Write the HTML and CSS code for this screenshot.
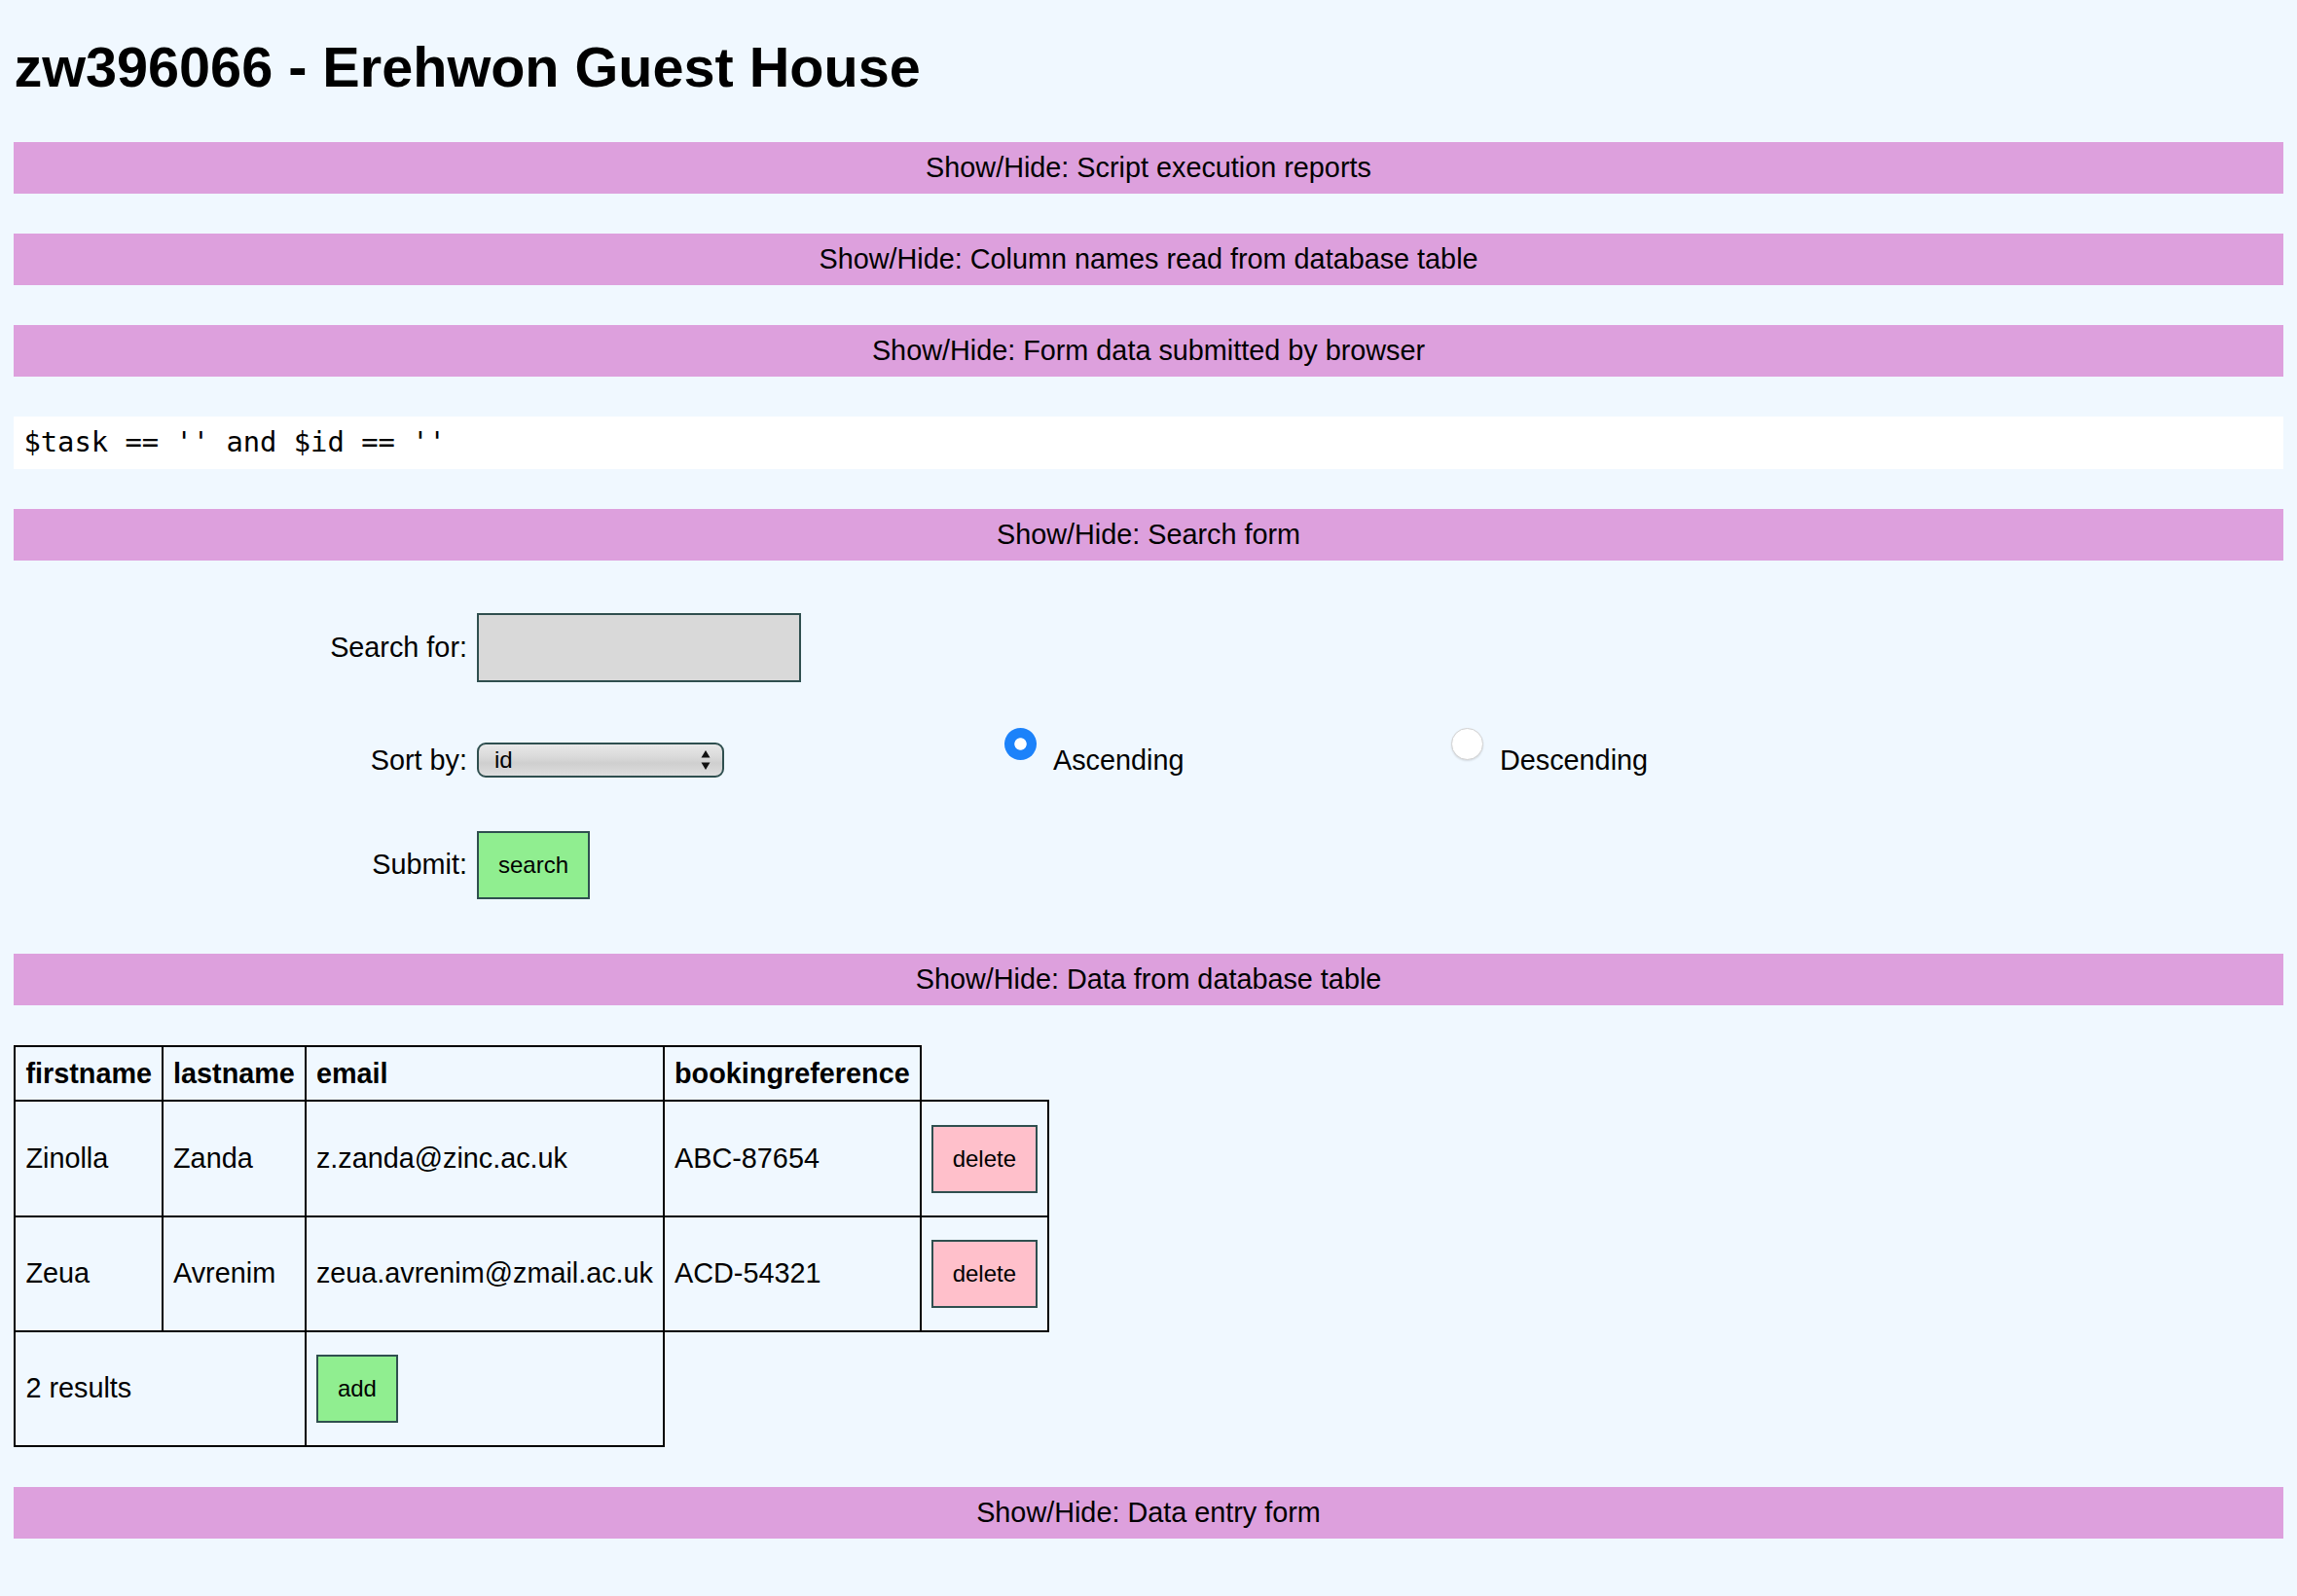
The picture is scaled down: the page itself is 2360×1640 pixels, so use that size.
FILE: index.html
```html
<!DOCTYPE html>
<html lang="en">
<head>
<meta charset="utf-8">
<title>zw396066 - Erehwon Guest House</title>
<link rel="stylesheet" href="styles.css">
</head>
<body>
<h1 class="title">zw396066 - Erehwon Guest House</h1>

<div class="toggle">Show/Hide: Script execution reports</div>
<div class="toggle">Show/Hide: Column names read from database table</div>
<div class="toggle">Show/Hide: Form data submitted by browser</div>

<pre class="code">$task == '' and $id == ''</pre>

<div class="toggle">Show/Hide: Search form</div>

<form class="search-form">
  <div class="form-row row-search">
    <label class="form-label" for="q">Search for:</label>
    <div class="form-field"><input id="q" class="search-input" type="text"></div>
  </div>
  <div class="form-row row-sort">
    <label class="form-label" for="sort">Sort by:</label>
    <div class="form-field">
      <span class="select-wrap">
        <select id="sort" class="sort-select"><option>id</option></select>
        <svg class="select-arrows" width="10" height="20" viewBox="0 0 10 20" aria-hidden="true"><path d="M5 0 L9.5 7.5 L0.5 7.5 Z M0.5 12.5 L9.5 12.5 L5 20 Z" fill="#111"/></svg>
      </span>
    </div>
    <label class="radio-cell"><input class="radio" type="radio" name="order" checked>Ascending</label>
    <label class="radio-cell"><input class="radio" type="radio" name="order">Descending</label>
  </div>
  <div class="form-row row-submit">
    <span class="form-label">Submit:</span>
    <div class="form-field"><button type="button" class="btn btn-go">search</button></div>
  </div>
</form>

<div class="toggle">Show/Hide: Data from database table</div>

<table class="data-table">
  <tr><th>firstname</th><th>lastname</th><th>email</th><th>bookingreference</th></tr>
  <tr><td>Zinolla</td><td>Zanda</td><td>z.zanda@zinc.ac.uk</td><td>ABC-87654</td><td><button type="button" class="btn btn-delete">delete</button></td></tr>
  <tr><td>Zeua</td><td>Avrenim</td><td>zeua.avrenim@zmail.ac.uk</td><td>ACD-54321</td><td><button type="button" class="btn btn-delete">delete</button></td></tr>
  <tr><td colspan="2">2 results</td><td><button type="button" class="btn btn-go">add</button></td></tr>
</table>

<div class="toggle">Show/Hide: Data entry form</div>
</body>
</html>
```

FILE: styles.css
```css
html {
  background: #f0f8ff;
}

body {
  margin: 14.4px;
  background: #f0f8ff;
  color: #000;
  font-family: "Liberation Sans", Arial, Helvetica, sans-serif;
  font-size: 28.8px;
  line-height: normal;
}

.title {
  font-size: 57.6px;
  font-weight: bold;
  margin: 22px 0 44px;
}

.toggle {
  background: #dda0dd;
  text-align: center;
  padding: 10px;
  line-height: 33px;
  margin: 41px 0;
}

.code {
  background: #fff;
  font-family: "DejaVu Sans Mono", "Liberation Mono", monospace;
  font-size: 28.8px;
  line-height: 33.5px;
  padding: 10px;
  margin: 41px 0;
  white-space: pre;
}

/* search form */
.search-form {
  margin: 54px 0 56px;
}

.form-row {
  display: grid;
  grid-template-columns: 475.6px 542px 459px 1fr;
  align-items: center;
}

.row-sort {
  margin-top: 47.5px;
}

.row-submit {
  margin-top: 39.5px;
}

.form-label {
  text-align: right;
  padding-right: 10px;
  line-height: 33px;
}

.form-field {
  display: flex;
  align-items: center;
}

.search-input {
  box-sizing: border-box;
  width: 333px;
  height: 71px;
  margin: 0;
  border: 2px solid #2f4f4f;
  background: #d9d9d9;
  font-family: inherit;
  font-size: 24px;
  padding: 0 6px;
}

.select-wrap {
  position: relative;
  display: inline-block;
}

.sort-select {
  appearance: none;
  -webkit-appearance: none;
  box-sizing: border-box;
  display: block;
  width: 254px;
  height: 36px;
  margin: 0;
  padding: 0 30px 0 16px;
  border: 2px solid #2f4f4f;
  border-radius: 9px;
  background: linear-gradient(#e8e8e8 0%, #dadada 40%, #cfcfcf 60%, #dedede 100%);
  font-family: inherit;
  font-size: 24px;
  line-height: 32px;
  color: #000;
}

.select-arrows {
  position: absolute;
  right: 14px;
  top: 8px;
  pointer-events: none;
}

.radio-cell {
  display: flex;
  align-items: center;
  line-height: 33px;
}

.radio {
  appearance: none;
  -webkit-appearance: none;
  box-sizing: border-box;
  width: 33px;
  height: 33px;
  margin: 0 17px 33px 0;
  border-radius: 50%;
  border: 1px solid #d2d2d2;
  background: #fff;
  box-shadow: 0 1px 2px rgba(0, 0, 0, 0.12);
}

.radio:checked {
  border: none;
  background: radial-gradient(circle, #fff 0 5.8px, #1c82fa 6.6px);
  box-shadow: none;
}

/* buttons */
.btn {
  box-sizing: border-box;
  border: 2px solid #2f4f4f;
  border-radius: 0;
  padding: 19px 20px;
  margin: 0;
  font-family: inherit;
  font-size: 24px;
  line-height: 28px;
  color: #000;
}

.btn-go {
  background: #90ee90;
}

.btn-delete {
  background: #ffc0cb;
}

/* data table */
.data-table {
  border-collapse: collapse;
  margin: 41px 0;
}

.data-table th,
.data-table td {
  border: 2px solid #000;
  padding: 10.8px 10px;
  text-align: left;
  vertical-align: middle;
  white-space: nowrap;
  line-height: 33px;
}

.data-table th {
  font-weight: bold;
}

.data-table .btn {
  display: block;
  margin: 12.3px 0;
}
```
